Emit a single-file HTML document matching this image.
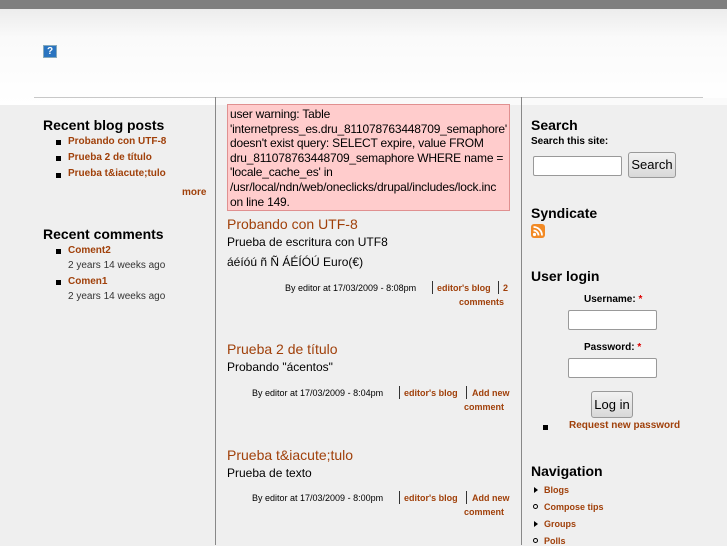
<!DOCTYPE html>
<html><head><meta charset="utf-8"><style>
*{margin:0;padding:0;box-sizing:border-box}
body{width:727px;height:545px;overflow:hidden;background:#efefef;font-family:"Liberation Sans","DejaVu Sans",sans-serif;position:relative;color:#000}
.a{position:absolute}
a{color:#a0400a;text-decoration:none;font-weight:bold}
h2{font-size:14px;font-weight:bold;position:absolute}
.b{font-size:10px;font-weight:bold}
.sq{position:absolute;width:5px;height:5px;background:#000}
.meta{font-size:9px;position:absolute;text-align:right}
.t{font-size:14px;color:#a0400a;position:absolute}
.p{font-size:12px;position:absolute}
input{position:absolute;border:1px solid #999;border-radius:2px;background:#fff}
.btn{position:absolute;border:1px solid #999;border-radius:3px;background:linear-gradient(#f2f2f2,#d8d8d8);font-size:13px;text-align:center}
</style></head><body>
<div class="a" style="left:0;top:0;width:727px;height:9px;background:#7f7f7f"></div>
<div class="a" style="left:0;top:9px;width:727px;height:96px;background:linear-gradient(#ececec,#fafafa 30%,#fff)"></div>
<div class="a" style="left:43px;top:45px;width:14px;height:13px;background:#2a74c0;border:1px solid #8ab;color:#fff;font-size:10px;font-weight:bold;text-align:center;line-height:11px">?</div>
<div class="a" style="left:34px;top:97px;width:669px;height:1px;background:#c8c8c8"></div>
<div class="a" style="left:215px;top:97px;width:1px;height:448px;background:#888"></div>
<div class="a" style="left:521px;top:97px;width:1px;height:448px;background:#888"></div>
<div class="a" style="left:216px;top:98px;width:305px;height:7px;background:#fafafa"></div>
<div class="a" style="left:522px;top:98px;width:205px;height:7px;background:#fafafa"></div>

<h2 style="left:43px;top:117px">Recent blog posts</h2>
<div class="sq" style="left:56px;top:140px"></div><a class="a b" style="left:68px;top:136px">Probando con UTF-8</a>
<div class="sq" style="left:56px;top:156px"></div><a class="a b" style="left:68px;top:152px">Prueba 2 de título</a>
<div class="sq" style="left:56px;top:173px"></div><a class="a b" style="left:68px;top:168px">Prueba t&amp;iacute;tulo</a>
<a class="a b" style="left:182px;top:187px">more</a>
<h2 style="left:43px;top:226px">Recent comments</h2>
<div class="sq" style="left:56px;top:249px"></div><a class="a b" style="left:68px;top:245px">Coment2</a>
<div class="a" style="left:68px;top:260px;font-size:10px;color:#333">2 years 14 weeks ago</div>
<div class="sq" style="left:56px;top:280px"></div><a class="a b" style="left:68px;top:276px">Comen1</a>
<div class="a" style="left:68px;top:291px;font-size:10px;color:#333">2 years 14 weeks ago</div>

<div class="a" style="left:227px;top:104px;width:283px;height:107px;background:#ffcccc;border:1px solid #e09090;font-size:12px;line-height:14.6px;padding:2px 2px;white-space:nowrap;letter-spacing:-0.2px;overflow:hidden">user warning: Table<br>'internetpress_es.dru_811078763448709_semaphore'<br>doesn't exist query: SELECT expire, value FROM<br>dru_811078763448709_semaphore WHERE name =<br>'locale_cache_es' in<br>/usr/local/ndn/web/oneclicks/drupal/includes/lock.inc<br>on line 149.</div>
<div class="t" style="left:227px;top:216px">Probando con UTF-8</div>
<div class="p" style="left:227px;top:235px">Prueba de escritura con UTF8</div>
<div class="p" style="left:227px;top:255px">áéíóú ñ Ñ ÁÉÍÓÚ Euro(€)</div>
<div class="meta" style="left:285px;top:283px">By editor at 17/03/2009 - 8:08pm</div>
<div class="a" style="left:432px;top:281px;width:1px;height:13px;background:#333"></div>
<a class="a" style="left:437px;top:283px;font-size:9px">editor's blog</a>
<div class="a" style="left:498px;top:281px;width:1px;height:13px;background:#333"></div>
<a class="a" style="left:503px;top:283px;font-size:9px">2</a>
<a class="a" style="left:459px;top:297px;font-size:9px">comments</a>

<div class="t" style="left:227px;top:341px">Prueba 2 de título</div>
<div class="p" style="left:227px;top:360px">Probando "ácentos"</div>
<div class="meta" style="left:252px;top:388px">By editor at 17/03/2009 - 8:04pm</div>
<div class="a" style="left:399px;top:386px;width:1px;height:13px;background:#333"></div>
<a class="a" style="left:404px;top:388px;font-size:9px">editor's blog</a>
<div class="a" style="left:466px;top:386px;width:1px;height:13px;background:#333"></div>
<a class="a" style="left:472px;top:388px;font-size:9px">Add new</a>
<a class="a" style="left:464px;top:402px;font-size:9px">comment</a>

<div class="t" style="left:227px;top:447px">Prueba t&amp;iacute;tulo</div>
<div class="p" style="left:227px;top:466px">Prueba de texto</div>
<div class="meta" style="left:252px;top:493px">By editor at 17/03/2009 - 8:00pm</div>
<div class="a" style="left:399px;top:491px;width:1px;height:13px;background:#333"></div>
<a class="a" style="left:404px;top:493px;font-size:9px">editor's blog</a>
<div class="a" style="left:466px;top:491px;width:1px;height:13px;background:#333"></div>
<a class="a" style="left:472px;top:493px;font-size:9px">Add new</a>
<a class="a" style="left:464px;top:507px;font-size:9px">comment</a>

<h2 style="left:531px;top:117px">Search</h2>
<div class="a b" style="left:531px;top:136px">Search this site:</div>
<input style="left:533px;top:156px;width:89px;height:20px">
<div class="btn" style="left:628px;top:152px;width:48px;height:26px;line-height:24px">Search</div>
<h2 style="left:531px;top:205px">Syndicate</h2>
<div class="a" style="left:531px;top:224px;width:14px;height:14px;background:#f28a25;border-radius:3px"><svg width="14" height="14"><circle cx="3.5" cy="10.5" r="1.6" fill="#fff"/><path d="M2.5 6.5a5 5 0 0 1 5 5M2.5 3a8.5 8.5 0 0 1 8.5 8.5" stroke="#fff" stroke-width="1.8" fill="none"/></svg></div>
<h2 style="left:531px;top:268px">User login</h2>
<div class="a b" style="left:584px;top:294px">Username: <span style="color:#d00">*</span></div>
<input style="left:568px;top:310px;width:89px;height:20px">
<div class="a b" style="left:584px;top:342px">Password: <span style="color:#d00">*</span></div>
<input style="left:568px;top:358px;width:89px;height:20px">
<div class="btn" style="left:591px;top:391px;width:42px;height:27px;line-height:26px">Log in</div>
<div class="sq" style="left:543px;top:425px"></div>
<a class="a b" style="left:569px;top:420px">Request new password</a>
<h2 style="left:531px;top:463px">Navigation</h2>
<div class="a" style="left:534px;top:487px;border-left:4px solid #000;border-top:3px solid transparent;border-bottom:3px solid transparent"></div>
<a class="a" style="left:544px;top:485px;font-size:9px">Blogs</a>
<div class="a" style="left:533px;top:504px;width:5px;height:5px;border:1px solid #000;border-radius:50%"></div>
<a class="a" style="left:544px;top:502px;font-size:9px">Compose tips</a>
<div class="a" style="left:534px;top:521px;border-left:4px solid #000;border-top:3px solid transparent;border-bottom:3px solid transparent"></div>
<a class="a" style="left:544px;top:519px;font-size:9px">Groups</a>
<div class="a" style="left:533px;top:538px;width:5px;height:5px;border:1px solid #000;border-radius:50%"></div>
<a class="a" style="left:544px;top:536px;font-size:9px">Polls</a>
</body></html>
